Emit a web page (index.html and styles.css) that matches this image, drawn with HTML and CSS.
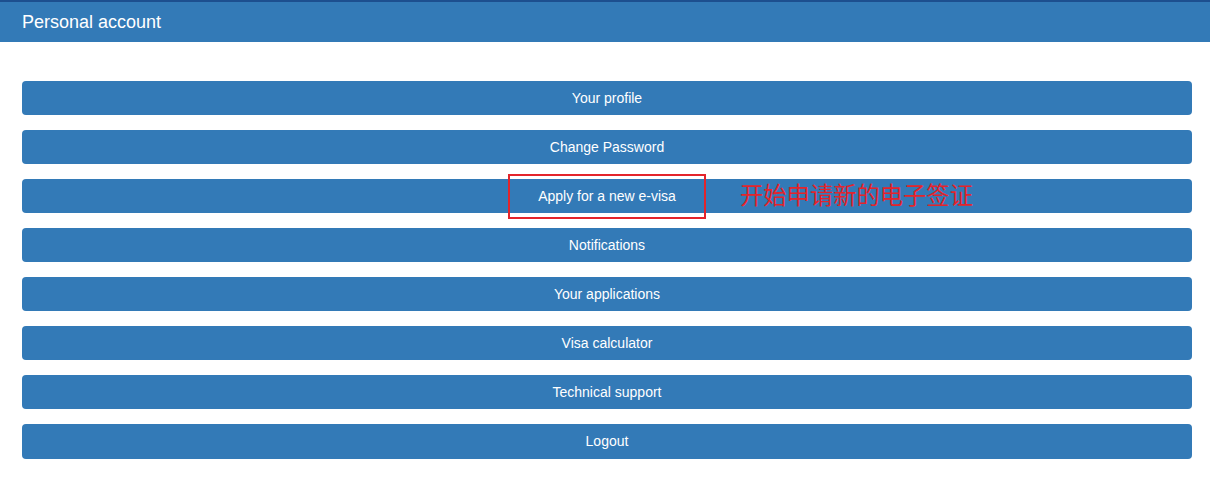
FILE: index.html
```html
<!DOCTYPE html>
<html>
<head>
    <title>Personal account</title>
    <link rel="stylesheet" href="styles.css">
</head>
<body>
    <div class="panel-heading">
        <h3>Personal account</h3>
    </div>

    <div class="menu">
        <a class="btn" href="#">Your profile</a>
        <a class="btn" href="#">Change Password</a>
        <a class="btn" href="#">Apply for a new e-visa</a>
        <a class="btn" href="#">Notifications</a>
        <a class="btn" href="#">Your applications</a>
        <a class="btn" href="#">Visa calculator</a>
        <a class="btn" href="#">Technical support</a>
        <a class="btn" href="#">Logout</a>

        <div class="mark-box"></div>
        <div class="mark-note">开始申请新的电子签证</div>
    </div>
</body>
</html>
```

FILE: styles.css
```css
body {
    margin: 0;
    font-family: "Liberation Sans", Arial, sans-serif;
    font-size: 14px;
    background-color: #fff;
}

.panel-heading {
    height: 40px;
    background-color: #337ab7;
    border-top: 2px solid #1d4f8f;
    padding: 0 22px;
    display: flex;
    align-items: center;
}

.panel-heading h3 {
    margin: 0;
    color: #fff;
    font-size: 18px;
    font-weight: normal;
}

.menu {
    position: relative;
    width: 1170px;
    margin: 39px 0 0 22px;
    display: flex;
    flex-direction: column;
    gap: 15px;
}

.btn {
    display: block;
    height: 34px;
    line-height: 34px;
    text-align: center;
    color: #fff;
    text-decoration: none;
    background-color: #337ab7;
    border-radius: 4px;
}

.btn:last-of-type {
    height: 35px;
    line-height: 35px;
}

/* red annotation around the e-visa item */
.mark-box {
    position: absolute;
    left: 486px;
    top: 93px;
    width: 194px;
    height: 41px;
    border: 2px solid #e3242b;
}

.mark-note {
    position: absolute;
    left: 718px;
    top: 99px;
    color: #e3242b;
    font-family: "Noto Sans CJK SC", sans-serif;
    font-size: 23.3px;
    line-height: 28px;
}
```
